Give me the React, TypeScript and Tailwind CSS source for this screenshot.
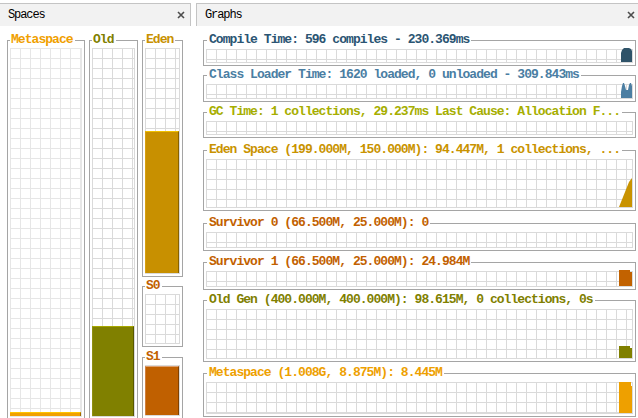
import React from "react";

function CloseX() {
  return (
    <svg width="8" height="8" viewBox="0 0 8 8" className="block shrink-0">
      <path d="M1 1 L7 7 M7 1 L1 7" stroke="#4d4d4d" strokeWidth="1.6" />
    </svg>
  );
}

const gridLight =
  "bg-[linear-gradient(to_right,#e6e6e6_1px,transparent_1px),linear-gradient(to_bottom,#e6e6e6_1px,transparent_1px)] [background-size:10px_10px] border-r border-b border-[#e6e6e6]";
const gridMid =
  "bg-[linear-gradient(to_right,#dadada_1px,transparent_1px),linear-gradient(to_bottom,#dadada_1px,transparent_1px)] [background-size:10px_10px] border-r border-b border-[#dadada]";

const titleFont =
  "[font-family:'Liberation_Mono',monospace] font-bold text-[13px] leading-[14px] tracking-[-0.95px] whitespace-nowrap";

function TitledBox({
  title,
  titleClass,
  boxClass,
  leadClass,
  textPad,
  bodyPad,
  gridClass,
  children,
}: {
  title: string;
  titleClass: string;
  boxClass: string;
  leadClass: string;
  textPad: string;
  bodyPad: string;
  gridClass: string;
  children?: React.ReactNode;
}) {
  return (
    <div className={`flex flex-col min-w-0 ${boxClass}`}>
      <div className="flex h-[14px] shrink-0">
        <div className={`h-[7px] self-end shrink-0 border-t border-l border-[#a5a5a5] ${leadClass}`} />
        <span className={`${titleFont} ${textPad} ${titleClass}`}>{title}</span>
        <div className="flex-1 min-w-[3px] h-[7px] self-end border-t border-r border-[#a5a5a5]" />
      </div>
      <div className={`flex-1 min-h-0 flex border-l border-r border-b border-[#a5a5a5] ${bodyPad}`}>
        <div className={`flex-1 min-w-0 ${gridClass}`}>{children}</div>
      </div>
    </div>
  );
}

function Chart({ w, h, d, fill }: { w: number; h: number; d: string; fill: string }) {
  return (
    <svg width={w} height={h} viewBox={`0 0 ${w} ${h}`} className="block shrink-0">
      <path d={d} fill={fill} />
    </svg>
  );
}

function Graph({
  title,
  titleClass,
  boxClass,
  chart,
}: {
  title: string;
  titleClass: string;
  boxClass: string;
  chart?: React.ReactNode;
}) {
  return (
    <TitledBox
      title={title}
      titleClass={titleClass}
      boxClass={`w-[433px] ${boxClass}`}
      leadClass="w-[4px]"
      textPad="px-[2px]"
      bodyPad="p-[2px]"
      gridClass={`flex justify-end items-end ${gridMid}`}
    >
      {chart}
    </TitledBox>
  );
}

function Space({
  title,
  titleClass,
  boxClass,
  gridClass,
  children,
}: {
  title: string;
  titleClass: string;
  boxClass: string;
  gridClass: string;
  children?: React.ReactNode;
}) {
  return (
    <TitledBox
      title={title}
      titleClass={titleClass}
      boxClass={boxClass}
      leadClass="w-[3px]"
      textPad="pl-[1px] pr-[2px]"
      bodyPad="px-[2px] pt-[1px] pb-[2px]"
      gridClass={`flex flex-col justify-end ${gridClass}`}
    >
      {children}
    </TitledBox>
  );
}

export default function App() {
  return (
    <div className="w-[638px] h-[418px] overflow-hidden bg-white flex">
      {/* Spaces panel */}
      <div className="w-[191px] shrink-0 flex flex-col">
        <div className="mt-[3px] h-[23px] shrink-0 bg-[#f2f2f2] border-t border-r border-[#c4c4c4] flex items-center justify-between pl-[8px] pr-[5px]">
          <span className="[font-family:'Liberation_Mono',monospace] text-[12px] tracking-[-1.1px] text-black leading-none">
            Spaces
          </span>
          <CloseX />
        </div>
        <div className="flex gap-[4px] pl-[7px] mt-[7px]">
          <Space
            title="Metaspace"
            titleClass="text-[#f0a000]"
            boxClass="w-[78px] h-[387px] shrink-0"
            gridClass={gridLight}
          >
            <div className="h-[4px] bg-[#f0a000] border-t border-t-[#ffc400] border-r border-r-[#a06a00]" />
          </Space>
          <Space
            title="Old"
            titleClass="text-[#808000]"
            boxClass="w-[49px] h-[387px] shrink-0"
            gridClass={gridMid}
          >
            <div className="h-[90px] bg-[#808000] border-t border-t-[#a8a800] border-l border-l-[#8f8f10] border-r border-r-[#585800]" />
          </Space>
          <div className="w-[41px] shrink-0 flex flex-col">
            <Space title="Eden" titleClass="text-[#c89100]" boxClass="h-[244px]" gridClass={gridMid}>
              <div className="h-[142px] bg-[#c89000] border-t border-t-[#f0c000] border-l border-l-[#d8a010] border-r border-r-[#876100]" />
            </Space>
            <Space title="S0" titleClass="text-[#c26100]" boxClass="h-[68px] mt-[2px]" gridClass={gridMid} />
            <Space title="S1" titleClass="text-[#c26100]" boxClass="h-[69px] mt-[3px]" gridClass={gridMid}>
              <div className="h-[49px] bg-[#c06000] border-t border-t-[#dda070] border-l border-l-[#d08040] border-r border-r-[#804000]" />
            </Space>
          </div>
        </div>
      </div>

      <div className="w-[5px] shrink-0" />

      {/* Graphs panel */}
      <div className="flex-1 flex flex-col">
        <div className="mt-[3px] h-[23px] shrink-0 bg-[#f2f2f2] border-t border-l border-[#c4c4c4] flex items-center justify-between pl-[8px] pr-[3px]">
          <span className="[font-family:'Liberation_Mono',monospace] text-[12px] tracking-[-1.1px] text-black leading-none">
            Graphs
          </span>
          <CloseX />
        </div>
        <div className="flex flex-col pl-[7px]">
          <Graph
            title="Compile Time: 596 compiles - 230.369ms"
            titleClass="text-[#2b5573]"
            boxClass="h-[33px] mt-[7px]"
            chart={<Chart w={11} h={14} fill="#2f5369" d="M0 14 L0 5 L1 2 L2 1 L3 0 L8 0 L10 1 L11 3 L11 14 Z" />}
          />
          <Graph
            title="Class Loader Time: 1620 loaded, 0 unloaded - 309.843ms"
            titleClass="text-[#4a7ea3]"
            boxClass="h-[34px] mt-[2px]"
            chart={<Chart w={11} h={15} fill="#4c7ea2" d="M0 15 L0 9 L1 3 L2 0 L3 0 L4 3 L5 7 L7 7 L8 2 L9 0 L10 0 L11 3 L11 15 Z" />}
          />
          <Graph
            title="GC Time: 1 collections, 29.237ms Last Cause: Allocation F..."
            titleClass="text-[#a6ae00]"
            boxClass="h-[33px] mt-[3px]"
          />
          <Graph
            title="Eden Space (199.000M, 150.000M): 94.447M, 1 collections, ..."
            titleClass="text-[#c99300]"
            boxClass="h-[68px] mt-[5px]"
            chart={<Chart w={13} h={29} fill="#c99300" d="M0 29 L8 9 L10 4 L13 0 L13 29 Z" />}
          />
          <Graph
            title="Survivor 0 (66.500M, 25.000M): 0"
            titleClass="text-[#c26100]"
            boxClass="h-[35px] mt-[5px]"
          />
          <Graph
            title="Survivor 1 (66.500M, 25.000M): 24.984M"
            titleClass="text-[#c26100]"
            boxClass="h-[35px] mt-[4px]"
            chart={<Chart w={13} h={16} fill="#c26200" d="M0 0 L11 0 L11 2 L13 2 L13 16 L0 16 Z" />}
          />
          <Graph
            title="Old Gen (400.000M, 400.000M): 98.615M, 0 collections, 0s"
            titleClass="text-[#808000]"
            boxClass="h-[69px] mt-[3px]"
            chart={<Chart w={13} h={12} fill="#808000" d="M0 0 L11 0 L11 2 L13 2 L13 12 L0 12 Z" />}
          />
          <Graph
            title="Metaspace (1.008G, 8.875M): 8.445M"
            titleClass="text-[#eea000]"
            boxClass="h-[51px] mt-[4px]"
            chart={<Chart w={13} h={31} fill="#eea000" d="M0 0 L12 0 L12 4 L13 4 L13 31 L0 31 Z" />}
          />
        </div>
      </div>
    </div>
  );
}
